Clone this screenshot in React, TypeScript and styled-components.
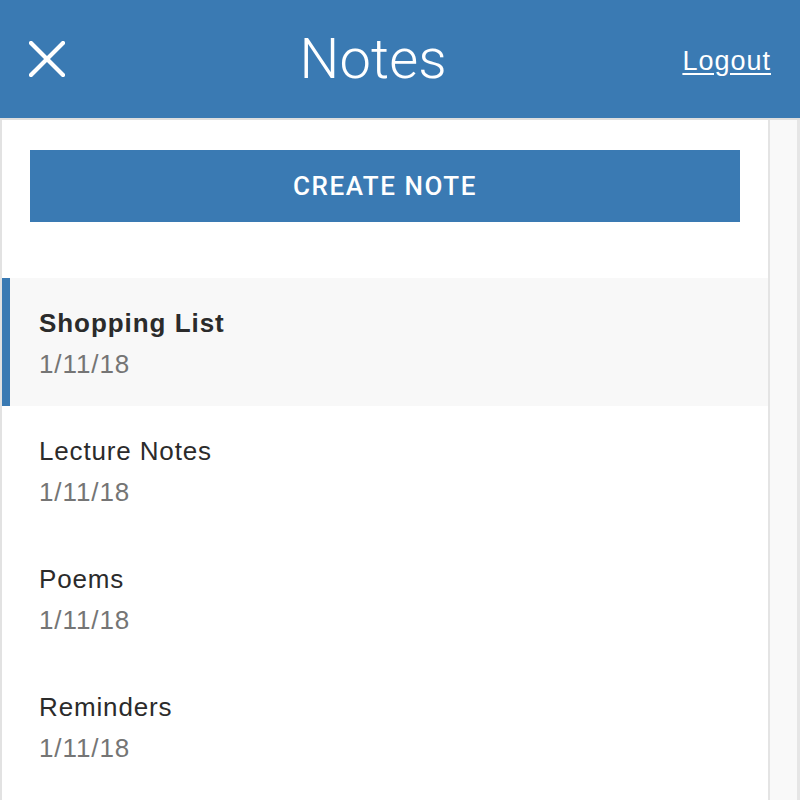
import React from "react";
import styled, { createGlobalStyle } from "styled-components";

const Global = createGlobalStyle`
  html, body { margin: 0; padding: 0; background: #ffffff; }
  body { font-family: "Liberation Sans", Arial, sans-serif; }
  * { box-sizing: border-box; }
`;

const Page = styled.div`
  width: 800px;
  height: 800px;
  display: flex;
  flex-direction: column;
  overflow: hidden;
`;

const Header = styled.header`
  height: 120px;
  flex: none;
  background: #3a7ab3;
  border-bottom: 2px solid #dedede;
  display: flex;
  align-items: center;
  justify-content: space-between;
  padding: 0 29px 0 29px;
  color: #ffffff;
`;

const CloseButton = styled.button`
  width: 36px;
  height: 36px;
  padding: 0;
  border: none;
  background: transparent;
  display: flex;
  cursor: pointer;
`;

const Title = styled.h1`
  margin: 0 0 0 -1px;
  font-family: Roboto, "Liberation Sans", sans-serif;
  font-weight: 300;
  font-size: 56px;
  letter-spacing: 0.2px;
  line-height: 1;
  color: #ffffff;
`;

const LogoutLink = styled.a`
  font-family: "Liberation Sans", Arial, sans-serif;
  font-size: 27px;
  margin-top: 4px;
  color: #ffffff;
  text-decoration: underline;
  text-underline-offset: 3px;
  letter-spacing: 1px;
  cursor: pointer;
`;

const Body = styled.div`
  flex: 1;
  display: flex;
  min-height: 0;
`;

const Sidebar = styled.aside`
  width: 770px;
  flex: none;
  background: #ffffff;
  border-left: 2px solid #e2e2e2;
  border-right: 2px solid #e4e4e4;
  padding-top: 30px;
  display: flex;
  flex-direction: column;
`;

const CreateButton = styled.button`
  margin: 0 28px;
  height: 72px;
  border: none;
  background: #3a7ab3;
  color: #ffffff;
  font-family: Roboto, "Liberation Sans", sans-serif;
  font-weight: 500;
  font-size: 26px;
  letter-spacing: 1.55px;
  cursor: pointer;
`;

const NoteList = styled.ul`
  list-style: none;
  margin: 56px 0 0;
  padding: 0;
`;

const NoteItem = styled.li<{ $active?: boolean }>`
  height: 128px;
  padding: 25px 0 21px ${(p) => (p.$active ? "29px" : "37px")};
  background: ${(p) => (p.$active ? "#f8f8f8" : "#ffffff")};
  border-left: ${(p) => (p.$active ? "8px solid #3a7ab3" : "none")};
  display: flex;
  flex-direction: column;
`;

const NoteTitle = styled.span<{ $active?: boolean }>`
  font-size: 26px;
  line-height: 41px;
  letter-spacing: ${(p) => (p.$active ? "0.95px" : "0.85px")};
  font-weight: ${(p) => (p.$active ? 700 : 400)};
  color: #2b2b2b;
`;

const NoteDate = styled.span`
  font-size: 26px;
  line-height: 41px;
  letter-spacing: 0.9px;
  color: #757575;
`;

const EditorPane = styled.main`
  flex: 1;
  background: #f9f9f9;
  border-right: 3px solid #e6e6e6;
`;

const notes = [
  { title: "Shopping List", date: "1/11/18", active: true },
  { title: "Lecture Notes", date: "1/11/18" },
  { title: "Poems", date: "1/11/18" },
  { title: "Reminders", date: "1/11/18" },
];

export default function App() {
  return (
    <Page>
      <Global />
      <Header>
        <CloseButton aria-label="Close">
          <svg width="36" height="36" viewBox="0 0 36 36">
            <path d="M2 2 L34 34 M34 2 L2 34" stroke="#ffffff" strokeWidth="4.2" strokeLinecap="square" fill="none" />
          </svg>
        </CloseButton>
        <Title>Notes</Title>
        <LogoutLink>Logout</LogoutLink>
      </Header>
      <Body>
        <Sidebar>
          <CreateButton>CREATE NOTE</CreateButton>
          <NoteList>
            {notes.map((n) => (
              <NoteItem key={n.title} $active={n.active}>
                <NoteTitle $active={n.active}>{n.title}</NoteTitle>
                <NoteDate>{n.date}</NoteDate>
              </NoteItem>
            ))}
          </NoteList>
        </Sidebar>
        <EditorPane />
      </Body>
    </Page>
  );
}
